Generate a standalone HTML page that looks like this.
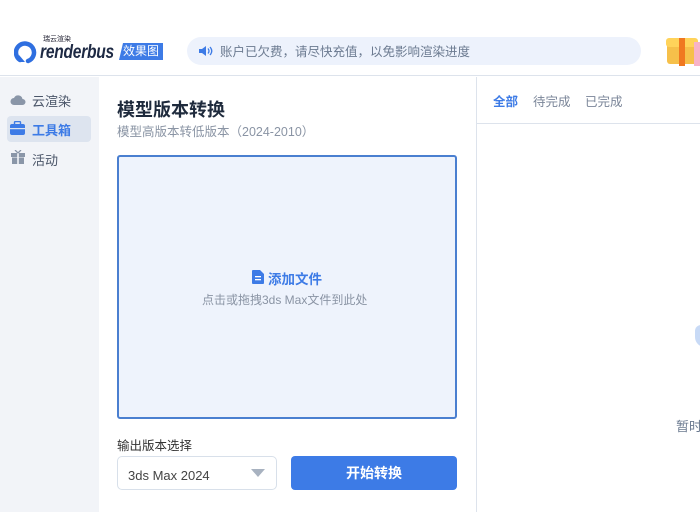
<!DOCTYPE html>
<html><head><meta charset="utf-8"><style>
*{margin:0;padding:0;box-sizing:border-box}
body{width:700px;height:512px;overflow:hidden;background:#fff;font-family:"Liberation Sans","Noto Sans CJK SC",sans-serif;position:relative}
.abs{position:absolute;white-space:nowrap;line-height:1.8}
</style></head><body>
<!-- header -->
<div class="abs" style="left:0;top:0;width:700px;height:76px;border-bottom:1px solid #dde3ec;background:#fff"></div>
<svg class="abs" style="left:14px;top:40px" width="24" height="24" viewBox="0 0 24 24"><path d="M6 20 A9 9 0 1 1 14 21" fill="none" stroke="#2f6fe0" stroke-width="4.5" stroke-linecap="round"/><path d="M5 15 L5 22 L11 22 Z" fill="#2f6fe0"/></svg>
<div class="abs" style="left:43px;top:36px;font-size:7px;line-height:1.2;color:#223;">瑞云渲染</div>
<div class="abs" style="left:40px;top:42px;font-size:19px;line-height:1.2;font-weight:bold;font-style:italic;color:#1e2a44;transform:scaleX(0.82);transform-origin:left top;letter-spacing:-0.3px">renderbus</div>
<div class="abs" style="left:119px;top:43px;width:44px;height:17px;background:#3d7be6;color:#fff;font-size:12px;line-height:17px;text-align:center;clip-path:polygon(4px 0,100% 0,100% 100%,0 100%)">效果图</div>
<div class="abs" style="left:187px;top:37px;width:454px;height:28px;border-radius:14px;background:#edf2fc"></div>
<svg class="abs" style="left:197px;top:43px" width="16" height="16" viewBox="0 0 16 16"><path d="M2 6h3l4-3v10l-4-3H2z" fill="#3d7be6"/><path d="M11 5.5q2 2.5 0 5M13 4q3.5 4 0 8" fill="none" stroke="#3d7be6" stroke-width="1.3"/></svg>
<div class="abs" style="left:220px;top:41px;font-size:12.5px;color:#6b7a90">账户已欠费，请尽快充值，以免影响渲染进度</div>
<div class="abs" style="left:667px;top:44px;width:30px;height:20px;background:#f6c04a;border-radius:3px"></div>
<div class="abs" style="left:666px;top:38px;width:32px;height:9px;background:#ffd35a;border-radius:3px"></div>
<div class="abs" style="left:679px;top:38px;width:6px;height:28px;background:#f07820"></div>
<div class="abs" style="left:694px;top:42px;width:6px;height:24px;background:#f8b3c8"></div>
<!-- sidebar -->
<div class="abs" style="left:0;top:77px;width:99px;height:435px;background:#f2f4f8"></div>
<div class="abs" style="left:7px;top:116px;width:84px;height:26px;background:#dde4ef;border-radius:4px"></div>
<svg class="abs" style="left:10px;top:93px" width="16" height="14" viewBox="0 0 16 14"><path d="M4 12a3.5 3.5 0 0 1 0-7a4.5 4.5 0 0 1 8.5 1a3 3 0 0 1 0 6z" fill="#8a96a8"/></svg>
<div class="abs" style="left:32px;top:90px;font-size:13px;color:#4a5568">云渲染</div>
<svg class="abs" style="left:10px;top:121px" width="15" height="14" viewBox="0 0 15 14"><rect x="0" y="3" width="15" height="11" rx="2" fill="#3d7be6"/><rect x="4.5" y="0.5" width="6" height="4" rx="1" fill="none" stroke="#3d7be6" stroke-width="1.4"/><rect x="0" y="7" width="15" height="1.2" fill="#dde4ef"/></svg>
<div class="abs" style="left:32px;top:119px;font-size:13px;color:#3d7be6;font-weight:bold">工具箱</div>
<svg class="abs" style="left:11px;top:150px" width="14" height="14" viewBox="0 0 14 14"><rect x="0" y="3" width="14" height="4" fill="#8a96a8"/><rect x="1" y="7.5" width="12" height="6.5" fill="#8a96a8"/><rect x="6.2" y="3" width="1.6" height="11" fill="#f2f4f8"/><path d="M7 3L4 0M7 3l3-3" stroke="#8a96a8" stroke-width="1.3"/></svg>
<div class="abs" style="left:32px;top:149px;font-size:13px;color:#4a5568">活动</div>
<!-- main -->
<div class="abs" style="left:117px;top:94px;font-size:18px;font-weight:bold;color:#1e2a3c">模型版本转换</div>
<div class="abs" style="left:117px;top:121px;font-size:12.5px;color:#8a94a4">模型高版本转低版本（2024-2010）</div>
<div class="abs" style="left:117px;top:155px;width:340px;height:264px;background:#eef3fc;border:2px solid #4a7fd0;border-radius:3px"></div>
<svg class="abs" style="left:252px;top:270px" width="12" height="14" viewBox="0 0 12 14"><path d="M0 1a1 1 0 0 1 1-1h7l4 4v9a1 1 0 0 1-1 1H1a1 1 0 0 1-1-1z" fill="#3d7be6"/><rect x="3" y="6" width="6" height="1.3" fill="#fff"/><rect x="3" y="9" width="6" height="1.3" fill="#fff"/></svg>
<div class="abs" style="left:268px;top:268px;font-size:13.5px;font-weight:bold;color:#3d7be6">添加文件</div>
<div class="abs" style="left:202px;top:290px;font-size:12px;color:#8a94a4">点击或拖拽3ds Max文件到此处</div>
<div class="abs" style="left:117px;top:435px;font-size:12.5px;color:#333">输出版本选择</div>
<div class="abs" style="left:117px;top:456px;width:160px;height:34px;border:1px solid #d8e0ea;border-radius:5px"></div>
<div class="abs" style="left:128px;top:464px;font-size:13px;color:#444">3ds Max 2024</div>
<div class="abs" style="left:251px;top:469px;width:0;height:0;border-left:7px solid transparent;border-right:7px solid transparent;border-top:8px solid #a8b2c0"></div>
<div class="abs" style="left:291px;top:456px;width:166px;height:34px;background:#3d7be6;border-radius:4px;color:#fff;font-size:14px;font-weight:bold;text-align:center;line-height:34px">开始转换</div>
<!-- right panel -->
<div class="abs" style="left:476px;top:77px;width:1px;height:435px;background:#dde3ec"></div>
<div class="abs" style="left:477px;top:123px;width:223px;height:1px;background:#dde3ec"></div>
<div class="abs" style="left:493px;top:91px;font-size:12.5px;color:#3d7be6;font-weight:bold">全部</div>
<div class="abs" style="left:533px;top:91px;font-size:12.5px;color:#7a8598">待完成</div>
<div class="abs" style="left:585px;top:91px;font-size:12.5px;color:#7a8598">已完成</div>
<div class="abs" style="left:695px;top:325px;width:12px;height:22px;background:#c8daf6;border-radius:6px 0 0 10px"></div>
<div class="abs" style="left:676px;top:415px;font-size:13px;color:#6b7a90">暂时</div>
</body></html>
